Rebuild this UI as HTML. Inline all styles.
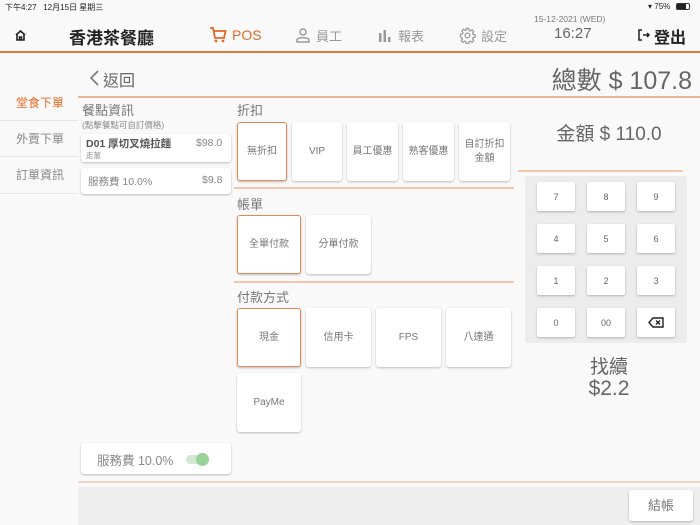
<!DOCTYPE html>
<html><head><meta charset="utf-8"><style>
*{margin:0;padding:0;box-sizing:border-box}
body{width:700px;height:525px;overflow:hidden;background:#f9f9f9;font-family:"Liberation Sans","Noto Sans CJK TC",sans-serif;color:#666;position:relative}
.a{position:absolute}
.t{white-space:nowrap}
.btn{position:absolute;background:#fff;border-radius:3px;box-shadow:0 1px 2px rgba(0,0,0,.25);display:flex;align-items:center;justify-content:center;text-align:center;font-size:10px;color:#777;line-height:14px}
.sel{border:1.5px solid #e08a5a}
.key{position:absolute;width:38px;height:29px;background:#fff;border-radius:2px;box-shadow:0 1px 2px rgba(0,0,0,.25);display:flex;align-items:center;justify-content:center;font-size:9px;color:#666}
.hl{position:absolute;height:1.5px;background:#f2c7ad}
</style></head><body>
<div class="a t" style="left:5px;top:2px;font-size:8px;color:#222">下午4:27&nbsp;&nbsp; 12月15日 星期三</div>
<div class="a t" style="left:648px;top:2px;font-size:8px;color:#222">▾ 75%</div>
<div class="a" style="left:676px;top:3px;width:14px;height:7px;border:1px solid #333;border-radius:2px"><div style="width:9px;height:5px;background:#222"></div></div>
<svg class="a" style="left:14px;top:29px" width="13" height="13" viewBox="0 0 13 13"><path d="M2 6 L6.5 2 L11 6 M3 5.5 V11 H10 V5.5 M5.5 11 V8 H7.5 V11" fill="none" stroke="#222" stroke-width="1.6"/></svg>
<div class="a t" style="left:69px;top:24px;font-size:17px;color:#222;font-weight:bold">香港茶餐廳</div>
<svg class="a" style="left:209px;top:26px" width="18" height="18" viewBox="0 0 18 18"><path d="M1 2 H4 L6 12 H15 L16.5 5 H5" fill="none" stroke="#e06a25" stroke-width="1.8"/><circle cx="7" cy="15" r="1.4" fill="#e06a25"/><circle cx="14" cy="15" r="1.4" fill="#e06a25"/></svg>
<div class="a t" style="left:232px;top:27px;font-size:14px;color:#e06a25">POS</div>
<svg class="a" style="left:295px;top:27px" width="16" height="16" viewBox="0 0 16 16"><circle cx="8" cy="5" r="3" fill="none" stroke="#999" stroke-width="1.5"/><path d="M2 15 V13 C2 10 14 10 14 13 V15 Z" fill="none" stroke="#999" stroke-width="1.5"/></svg>
<div class="a t" style="left:316px;top:26px;font-size:13px;color:#999">員工</div>
<svg class="a" style="left:378px;top:29px" width="14" height="13"><rect x="1" y="4" width="2.5" height="9" fill="#999"/><rect x="5.5" y="1" width="2.5" height="12" fill="#999"/><rect x="10" y="8" width="2.5" height="5" fill="#999"/></svg>
<div class="a t" style="left:398px;top:26px;font-size:13px;color:#999">報表</div>
<svg class="a" style="left:459px;top:27px" width="17" height="17" viewBox="0 0 24 24"><path d="M10.3 2h3.4l.5 2.8 1.8.8 2.4-1.6 2.4 2.4-1.6 2.4.8 1.8 2.8.5v3.4l-2.8.5-.8 1.8 1.6 2.4-2.4 2.4-2.4-1.6-1.8.8-.5 2.8h-3.4l-.5-2.8-1.8-.8-2.4 1.6-2.4-2.4 1.6-2.4-.8-1.8L2 13.7v-3.4l2.8-.5.8-1.8L4 5.6 6.4 3.2l2.4 1.6 1.8-.8z" fill="none" stroke="#999" stroke-width="1.8"/><circle cx="12" cy="12" r="3.3" fill="none" stroke="#999" stroke-width="1.8"/></svg>
<div class="a t" style="left:481px;top:26px;font-size:13px;color:#999">設定</div>
<div class="a t" style="left:534px;top:14px;font-size:8.5px;color:#777">15-12-2021 (WED)</div>
<div class="a t" style="left:554px;top:25px;font-size:15px;color:#666">16:27</div>
<svg class="a" style="left:637px;top:28px" width="14" height="14" viewBox="0 0 14 14"><path d="M5 2 H2 V12 H5 M6 7 H12 M10 5 L12 7 L10 9" fill="none" stroke="#222" stroke-width="1.5"/></svg>
<div class="a t" style="left:654px;top:24px;font-size:16px;color:#222;font-weight:bold">登出</div>
<div class="a" style="left:0;top:51px;width:700px;height:2px;background:#e07b3c"></div>

<div class="a t" style="left:16px;top:94px;font-size:12px;color:#e06a25">堂食下單</div>
<div class="a" style="left:0;top:120px;width:78px;height:1px;background:#e6e6e6"></div>
<div class="a t" style="left:16px;top:130px;font-size:12px;color:#888">外賣下單</div>
<div class="a" style="left:0;top:156px;width:78px;height:1px;background:#e6e6e6"></div>
<div class="a t" style="left:16px;top:166px;font-size:12px;color:#888">訂單資訊</div>
<div class="a" style="left:0;top:193px;width:78px;height:1px;background:#e6e6e6"></div>

<svg class="a" style="left:88px;top:69px" width="12" height="18"><path d="M10 2 L3 9 L10 16" fill="none" stroke="#777" stroke-width="1.6"/></svg>
<div class="a t" style="left:103px;top:67px;font-size:16px;color:#666">返回</div>
<div class="a t" style="right:8px;top:61px;font-size:25px;color:#666">總數 $ 107.8</div>
<div class="hl" style="left:78px;top:96px;width:622px;background:#eab596"></div>

<div class="a t" style="left:82px;top:100px;font-size:13px;color:#777">餐點資訊</div>
<div class="a t" style="left:82px;top:119px;font-size:8.5px;color:#888">(點擊餐點可自訂價格)</div>
<div class="btn" style="left:81px;top:134px;width:150px;height:28px;display:block"></div>
<div class="a t" style="left:86px;top:136px;font-size:10.5px;color:#555;font-weight:bold">D01 厚切叉燒拉麵</div>
<div class="a t" style="left:86px;top:150px;font-size:7.5px;color:#888">走蔥</div>
<div class="a t" style="left:196px;top:137px;font-size:10.5px;color:#888">$98.0</div>
<div class="btn" style="left:81px;top:168px;width:150px;height:26px"></div>
<div class="a t" style="left:88px;top:174px;font-size:10.5px;color:#888">服務費 10.0%</div>
<div class="a t" style="left:202px;top:174px;font-size:10.5px;color:#888">$9.8</div>

<div class="a t" style="left:237px;top:100px;font-size:13px;color:#777">折扣</div>
<div class="btn sel" style="left:237px;top:122px;width:50px;height:59px">無折扣</div>
<div class="btn" style="left:292px;top:122px;width:50px;height:59px">VIP</div>
<div class="btn" style="left:347px;top:122px;width:51px;height:59px">員工優惠</div>
<div class="btn" style="left:403px;top:122px;width:51px;height:59px">熟客優惠</div>
<div class="btn" style="left:459px;top:122px;width:51px;height:59px">自訂折扣<br>金額</div>
<div class="hl" style="left:234px;top:187px;width:280px"></div>

<div class="a t" style="left:237px;top:194px;font-size:13px;color:#777">帳單</div>
<div class="btn sel" style="left:237px;top:215px;width:64px;height:59px">全單付款</div>
<div class="btn" style="left:306px;top:215px;width:65px;height:59px">分單付款</div>
<div class="hl" style="left:234px;top:281px;width:280px"></div>

<div class="a t" style="left:237px;top:287px;font-size:13px;color:#777">付款方式</div>
<div class="btn sel" style="left:237px;top:308px;width:64px;height:59px">現金</div>
<div class="btn" style="left:306px;top:308px;width:65px;height:59px">信用卡</div>
<div class="btn" style="left:376px;top:308px;width:65px;height:59px">FPS</div>
<div class="btn" style="left:446px;top:308px;width:65px;height:59px">八達通</div>
<div class="btn" style="left:237px;top:373px;width:64px;height:59px">PayMe</div>

<div class="a t" style="left:518px;width:182px;text-align:center;top:119px;font-size:19px;color:#666">金額 $ 110.0</div>
<div class="hl" style="left:518px;top:170px;width:165px"></div>
<div class="a" style="left:525px;top:176px;width:162px;height:167px;background:#ececec;border-radius:3px"></div>
<div class="key" style="left:537px;top:182px">7</div><div class="key" style="left:587px;top:182px">8</div><div class="key" style="left:637px;top:182px">9</div>
<div class="key" style="left:537px;top:224px">4</div><div class="key" style="left:587px;top:224px">5</div><div class="key" style="left:637px;top:224px">6</div>
<div class="key" style="left:537px;top:266px">1</div><div class="key" style="left:587px;top:266px">2</div><div class="key" style="left:637px;top:266px">3</div>
<div class="key" style="left:537px;top:308px">0</div><div class="key" style="left:587px;top:308px">00</div>
<div class="key" style="left:637px;top:308px"><svg width="16" height="11" viewBox="0 0 16 11"><path d="M5 1 H15 V10 H5 L1 5.5 Z M8 3.5 L12 7.5 M12 3.5 L8 7.5" fill="none" stroke="#222" stroke-width="1.4"/></svg></div>
<div class="a t" style="left:518px;width:182px;text-align:center;top:352px;font-size:19px;color:#666">找續</div>
<div class="a t" style="left:518px;width:182px;text-align:center;top:377px;font-size:21px;color:#666">$2.2</div>

<div class="btn" style="left:81px;top:443px;width:150px;height:31px"></div>
<div class="a t" style="left:97px;top:450px;font-size:12.5px;color:#888">服務費 10.0%</div>
<div class="a" style="left:186px;top:455px;width:22px;height:9px;border-radius:5px;background:#cfe8cf"></div>
<div class="a" style="left:196px;top:453px;width:13px;height:13px;border-radius:50%;background:#99d199"></div>

<div class="hl" style="left:78px;top:481px;width:622px;background:#f2d6c6"></div>
<div class="a" style="left:78px;top:487px;width:622px;height:38px;background:#eeeeee"></div>
<div class="btn" style="left:629px;top:490px;width:64px;height:31px;font-size:13px">結帳</div>
</body></html>
